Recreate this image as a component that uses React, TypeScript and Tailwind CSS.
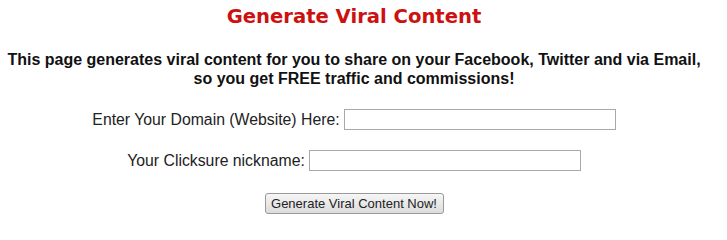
export default function App() {
  return (
    <div className="w-[708px] bg-white pt-[5px] text-center font-['Liberation_Sans',Arial,sans-serif]">
      <h1 className="font-['DejaVu_Sans',Verdana,sans-serif] text-[19.6px] font-bold leading-[24px] text-[#cc1111]">
        Generate Viral Content
      </h1>
      <p className="mt-[21px] text-[16px] font-bold leading-[19px] text-[#111]">
        This page generates viral content for you to share on your Facebook, Twitter and via Email,
        <br />
        so you get FREE traffic and commissions!
      </p>
      <div className="mt-[21px] flex flex-col items-center">
        <div className="flex items-center gap-[4px]">
          <label className="text-[15.8px] leading-[21px] text-[#222]">Enter Your Domain (Website) Here:</label>
          <input type="text" className="h-[21px] w-[272px] border border-[#a9a9a9] bg-white outline-none" />
        </div>
        <div className="mt-[20px] flex items-center gap-[4px]">
          <label className="text-[15.8px] leading-[21px] text-[#222]">Your Clicksure nickname:</label>
          <input type="text" className="h-[21px] w-[272px] border border-[#a9a9a9] bg-white outline-none" />
        </div>
        <button
          type="button"
          className="mt-[22px] h-[21px] w-[179px] rounded-[3px] border border-[#9a9a9a] bg-gradient-to-b from-[#f6f6f6] to-[#dcdcdc] text-[13px] leading-[19px] text-[#222]"
        >
          Generate Viral Content Now!
        </button>
      </div>
    </div>
  )
}
